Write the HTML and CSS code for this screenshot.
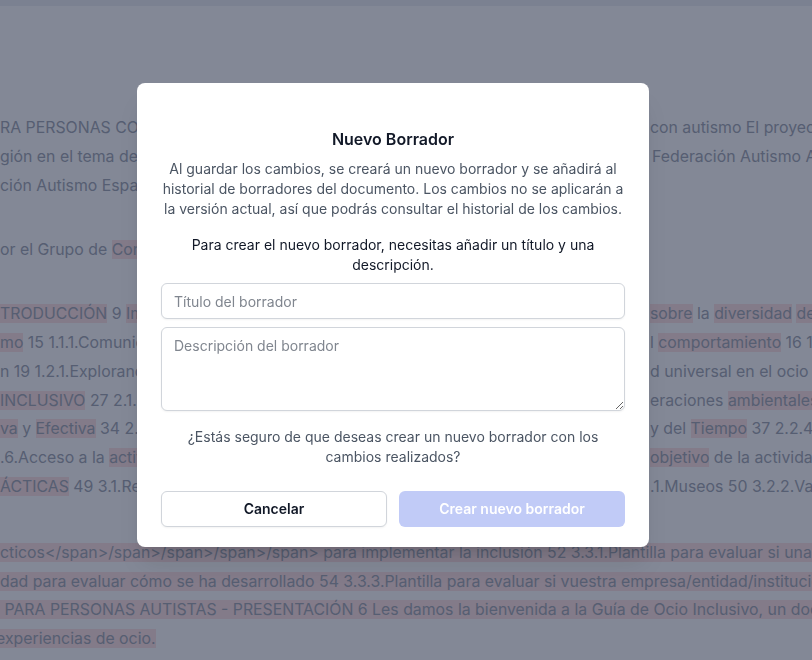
FILE: index.html
```html
<!DOCTYPE html>
<html lang="es">
<head>
<meta charset="utf-8">
<title>Nuevo Borrador</title>
<link rel="stylesheet" href="styles.css">
</head>
<body>
<div class="topbar"></div>
<main class="doc">
  <div class="block">
    <div class="line"><span class="l">RA PERSONAS CON AUTISMO. GUÍA DE OCIO INCLUSIVO PARA PERSONAS</span><span class="r">con autismo El proyecto de la Guía</span></div>
    <div class="line"><span class="l">gión en el tema del ocio inclusivo, impulsado por la</span><span class="r r-sp">Federación Autismo Andalucía</span></div>
    <div class="line"><span class="l">ción Autismo España y sus entidades miembro.</span><span class="r"></span></div>
  </div>
  <div class="block">
    <div class="line full">or el Grupo de <span class="hl">Con</span>ocimiento y Participación de la entidad.</div>
  </div>
  <div class="block">
    <div class="line"><span class="l"><span class="hl">TRODUCCIÓN</span> 9 <span class="hl">Importancia</span> del ocio para las personas autistas y la sensibilización</span><span class="r"><span class="hl">sobre</span> la <span class="hl">diversidad</span> <span class="hl">de</span></span></div>
    <div class="line"><span class="l"><span class="hl">mo</span> 15 1.1.1.Comunicación e interacción social y la flexibilidad de</span><span class="r">l <span class="hl">comportamiento</span> 16 1.1.2</span></div>
    <div class="line"><span class="l">n 19 1.2.1.Explorando el concepto de accesibilidad y diseño</span><span class="r">d universal en el ocio 21</span></div>
    <div class="line"><span class="l"><span class="hl">INCLUSIVO</span> 27 2.1.Planificación previa de la actividad y consid</span><span class="r">eraciones <span class="hl">ambientales</span></span></div>
    <div class="line"><span class="l"><span class="hl">va</span> y <span class="hl">Efectiva</span> 34 2.2.2.Anticipación y estructuración del Espacio</span><span class="r">y del <span class="hl">Tiempo</span> 37 2.2.4.</span></div>
    <div class="line"><span class="l">.6.Acceso a la <span class="hl">actividad</span> y comprensión de las normas y del</span><span class="r"><span class="hl">objetivo</span> de la actividad</span></div>
    <div class="line"><span class="l"><span class="hl">ÁCTICAS</span> 49 3.1.Recursos culturales y de ocio accesibles 3.2</span><span class="r">.1.Museos 50 3.2.2.Valores</span></div>
  </div>
  <div class="block block-last">
    <div class="line full"><span class="hl">cticos&lt;/span&gt;/span&gt;/span&gt;/span&gt;/span&gt; para implementar la inclusión 52 3.3.1.Plantilla para evaluar si una actividad es inclusiva</span></div>
    <div class="line full"><span class="hl">dad para evaluar cómo se ha desarrollado 54 3.3.3.Plantilla para evaluar si vuestra empresa/entidad/institución es inclusiva</span></div>
    <div class="line full"><span class="hl">&nbsp;PARA PERSONAS AUTISTAS - PRESENTACIÓN 6 Les damos la bienvenida a la Guía de Ocio Inclusivo, un documento</span></div>
    <div class="line full shift"><span class="hl">experiencias de ocio.</span></div>
  </div>
</main>

<div class="overlay">
  <section class="modal" role="dialog" aria-labelledby="modal-title">
    <h2 id="modal-title" class="modal-title">Nuevo Borrador</h2>
    <p class="modal-desc">Al guardar los cambios, se creará un nuevo borrador y se añadirá al historial de borradores del documento. Los cambios no se aplicarán a la versión actual, así que podrás consultar el historial de los cambios.</p>
    <p class="modal-req">Para crear el nuevo borrador, necesitas añadir un título y una descripción.</p>
    <input class="field field-input" type="text" placeholder="Título del borrador">
    <textarea class="field field-area" placeholder="Descripción del borrador"></textarea>
    <p class="modal-confirm">¿Estás seguro de que deseas crear un nuevo borrador con los cambios realizados?</p>
    <div class="actions">
      <button class="btn btn-cancel" type="button">Cancelar</button>
      <button class="btn btn-primary" type="button" disabled>Crear nuevo borrador</button>
    </div>
  </section>
</div>
</body>
</html>
```
FILE: styles.css
```css
* { box-sizing: border-box; }

html, body {
  margin: 0;
  padding: 0;
  width: 812px;
  height: 660px;
  overflow: hidden;
  background: #ffffff;
  font-family: Inter, "Noto Sans", "Liberation Sans", sans-serif;
}

.topbar {
  height: 6px;
  background: #eef0f3;
}

.doc {
  padding-top: 108px;
  color: #9ca3af;
  font-size: 15.85px;
  line-height: 28.8px;
}

.block + .block {
  margin-top: 35.5px;
}

.block.block-last {
  margin-top: 37px;
}

.line {
  display: grid;
  grid-template-columns: 650px 1fr;
  white-space: nowrap;
  height: 28.8px;
}

.line.full {
  display: block;
  overflow: hidden;
}

.line.shift {
  margin-left: -4px;
}

.l, .r {
  overflow: hidden;
}

.r-sp {
  padding-left: 2px;
}

.hl {
  background: #fee2e2;
}

.overlay {
  position: fixed;
  inset: 0;
  background: rgba(30, 38, 64, 0.55);
  display: flex;
  align-items: flex-start;
  justify-content: flex-start;
  padding: 83px 0 0 137px;
}

.modal {
  width: 512px;
  background: #ffffff;
  border-radius: 8px;
  padding: 44px 24px 20px;
  display: flex;
  flex-direction: column;
  text-align: center;
  box-shadow: 0 20px 25px -5px rgba(0, 0, 0, 0.1), 0 8px 10px -6px rgba(0, 0, 0, 0.1);
}

.modal-title {
  margin: 0;
  font-size: 16px;
  line-height: 24px;
  font-weight: 600;
  color: #111827;
}

.modal-desc {
  margin: 8px 0 0;
  font-size: 14px;
  line-height: 20px;
  color: #4b5563;
}

.modal-req {
  margin: 16px 0 0;
  font-size: 14px;
  line-height: 20px;
  color: #111827;
}

.field {
  display: block;
  width: 100%;
  margin-top: 8px;
  border: 1px solid #d1d5db;
  border-radius: 6px;
  background: #ffffff;
  font-family: inherit;
  font-size: 14px;
  line-height: 20px;
  color: #111827;
  padding: 7px 12px;
  text-align: left;
  box-shadow: 0 1px 2px rgba(0, 0, 0, 0.05);
  outline: none;
}

.field::placeholder {
  color: #80868f;
}

.field-input {
  height: 36px;
}

.field-area {
  height: 84px;
  padding-top: 8px;
  resize: vertical;
}

.modal-confirm {
  margin: 16px 0 0;
  font-size: 14px;
  line-height: 20px;
  color: #4b5563;
}

.actions {
  margin-top: 24px;
  display: grid;
  grid-template-columns: 1fr 1fr;
  gap: 12px;
}

.btn {
  height: 36px;
  border-radius: 6px;
  font-family: inherit;
  font-size: 14px;
  font-weight: 600;
  line-height: 20px;
  cursor: pointer;
}

.btn-cancel {
  background: #ffffff;
  border: 1px solid #d1d5db;
  color: #111827;
  box-shadow: 0 1px 2px rgba(0, 0, 0, 0.05);
}

.btn-primary {
  background: #c1cbf7;
  border: none;
  color: #ffffff;
}
```
